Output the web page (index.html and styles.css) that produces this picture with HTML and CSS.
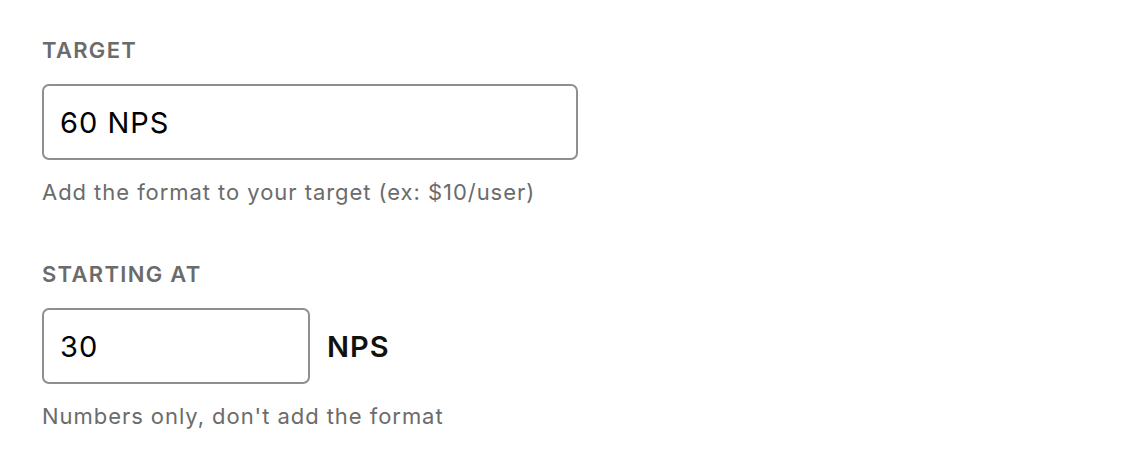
FILE: index.html
```html
<!DOCTYPE html>
<html>
<head>
<meta charset="utf-8">
<link rel="stylesheet" href="styles.css">
</head>
<body>
<div class="form">
  <div class="field">
    <div class="label">TARGET</div>
    <div class="input wide">60 NPS</div>
    <div class="help">Add the format to your target (ex: $10/user)</div>
  </div>
  <div class="field">
    <div class="label">STARTING AT</div>
    <div class="row">
      <div class="input narrow">30</div>
      <div class="unit">NPS</div>
    </div>
    <div class="help">Numbers only, don't add the format</div>
  </div>
</div>
</body>
</html>
```
FILE: styles.css
```css
html, body {
  margin: 0;
  padding: 0;
  background: #ffffff;
}
body {
  font-family: Inter, "Noto Sans", sans-serif;
}
.form {
  padding: 38px 0 0 42px;
  display: flex;
  flex-direction: column;
  gap: 56px;
}
.field {
  display: flex;
  flex-direction: column;
}
.label {
  font-size: 22px;
  line-height: 24px;
  font-weight: 600;
  color: #6b6b6b;
  letter-spacing: 1.3px;
  margin-bottom: 22px;
}
.input {
  box-sizing: border-box;
  height: 76px;
  border: 2px solid #8f8f8f;
  border-radius: 7px;
  padding: 0 16px;
  display: flex;
  align-items: center;
  font-size: 29px;
  letter-spacing: 1px;
  color: #000;
}
.wide { width: 536px; }
.narrow { width: 268px; }
.row {
  display: flex;
  align-items: center;
  gap: 17px;
}
.unit {
  font-size: 29px;
  font-weight: 600;
  letter-spacing: 1px;
  color: #111;
}
.help {
  margin-top: 18px;
  font-size: 22px;
  line-height: 28px;
  color: #6b6b6b;
  letter-spacing: 0.95px;
}
```
